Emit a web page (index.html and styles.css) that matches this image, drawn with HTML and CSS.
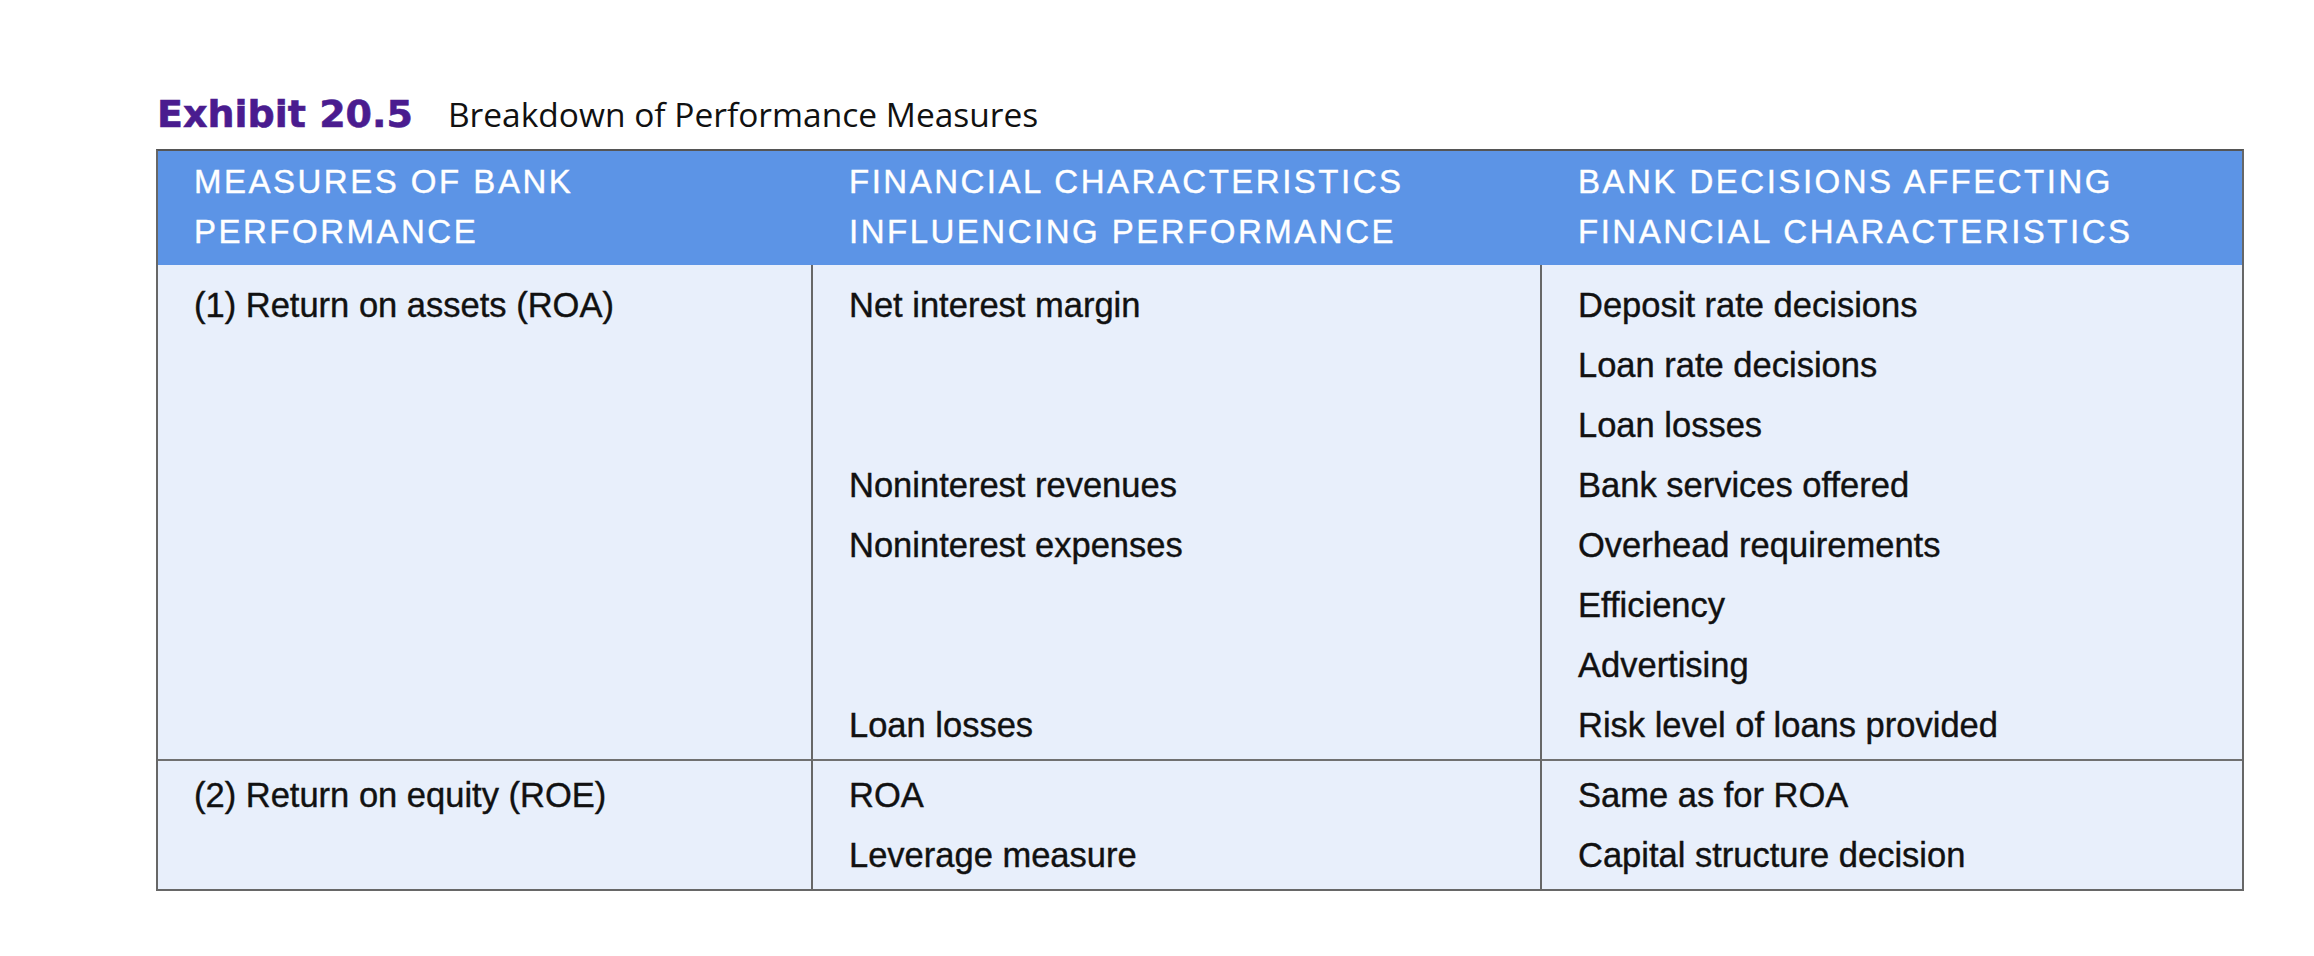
FILE: index.html
```html
<!DOCTYPE html>
<html lang="en">
<head>
<meta charset="utf-8">
<title>Exhibit 20.5 Breakdown of Performance Measures</title>
<link rel="stylesheet" href="styles.css">
</head>
<body>
<div class="page">
  <h1 class="exhibit-title">
    <span class="exhibit-num">Exhibit 20.5</span>
    <span class="exhibit-caption">Breakdown of Performance Measures</span>
  </h1>
  <table class="measures">
    <colgroup>
      <col class="col-measures">
      <col class="col-characteristics">
      <col class="col-decisions">
    </colgroup>
    <thead>
      <tr>
        <th>MEASURES OF BANK<br>PERFORMANCE</th>
        <th>FINANCIAL CHARACTERISTICS<br>INFLUENCING PERFORMANCE</th>
        <th>BANK DECISIONS AFFECTING<br>FINANCIAL CHARACTERISTICS</th>
      </tr>
    </thead>
    <tbody>
      <tr class="row-first">
        <td>
          <ul class="lines">
            <li>(1) Return on assets (ROA)</li>
          </ul>
        </td>
        <td>
          <ul class="lines">
            <li>Net interest margin</li>
            <li class="skip-2">Noninterest revenues</li>
            <li>Noninterest expenses</li>
            <li class="skip-2">Loan losses</li>
          </ul>
        </td>
        <td>
          <ul class="lines">
            <li>Deposit rate decisions</li>
            <li>Loan rate decisions</li>
            <li>Loan losses</li>
            <li>Bank services offered</li>
            <li>Overhead requirements</li>
            <li>Efficiency</li>
            <li>Advertising</li>
            <li>Risk level of loans provided</li>
          </ul>
        </td>
      </tr>
      <tr class="row-next">
        <td>
          <ul class="lines">
            <li>(2) Return on equity (ROE)</li>
          </ul>
        </td>
        <td>
          <ul class="lines">
            <li>ROA</li>
            <li>Leverage measure</li>
          </ul>
        </td>
        <td>
          <ul class="lines">
            <li>Same as for ROA</li>
            <li>Capital structure decision</li>
          </ul>
        </td>
      </tr>
    </tbody>
  </table>
</div>
</body>
</html>
```

FILE: styles.css
```css
html, body {
  margin: 0;
  padding: 0;
  background: #ffffff;
}

.page {
  padding: 94px 0 0 156px;
}

.exhibit-title {
  display: flex;
  align-items: baseline;
  gap: 35px;
  margin: 0 0 15px 1px;
  font-weight: normal;
}

.exhibit-num {
  font-family: "DejaVu Sans", "Liberation Sans", sans-serif;
  font-weight: bold;
  font-size: 38px;
  line-height: 40px;
  color: #4a1c8f;
  -webkit-text-stroke: 0.6px #4a1c8f;
}

.exhibit-caption {
  font-family: "Open Sans", "Noto Sans", sans-serif;
  font-size: 33.5px;
  line-height: 40px;
  color: #111111;
}

.measures {
  width: 2088px;
  table-layout: fixed;
  border-collapse: separate;
  border-spacing: 0;
  border: 2px solid #676767;
  border-top-color: #555555;
  background: #e8effb;
  font-family: "Liberation Sans", Arial, sans-serif;
}

.col-measures { width: 653px; }
.col-characteristics { width: 729px; }
.col-decisions { width: 702px; }

.measures th {
  background: #5c94e6;
  color: #ffffff;
  font-weight: normal;
  font-size: 33px;
  line-height: 50px;
  letter-spacing: 2.5px;
  text-align: left;
  vertical-align: top;
  padding: 6px 10px 8px 36px;
  -webkit-text-stroke: 0.4px #ffffff;
}

.measures th + th {
  border-left: 2px solid transparent;
}

.measures td {
  vertical-align: top;
  padding: 4px 10px 4px 36px;
  font-size: 34.5px;
  line-height: 60px;
  color: #111111;
  -webkit-text-stroke: 0.4px #111111;
}

.measures td + td {
  border-left: 2px solid #676767;
}

.row-first td {
  padding-top: 10px;
}

.row-next td {
  border-top: 2px solid #707070;
}

.lines {
  list-style: none;
  margin: 0;
  padding: 0;
}

.lines .skip-2 {
  margin-top: 120px;
}
```
